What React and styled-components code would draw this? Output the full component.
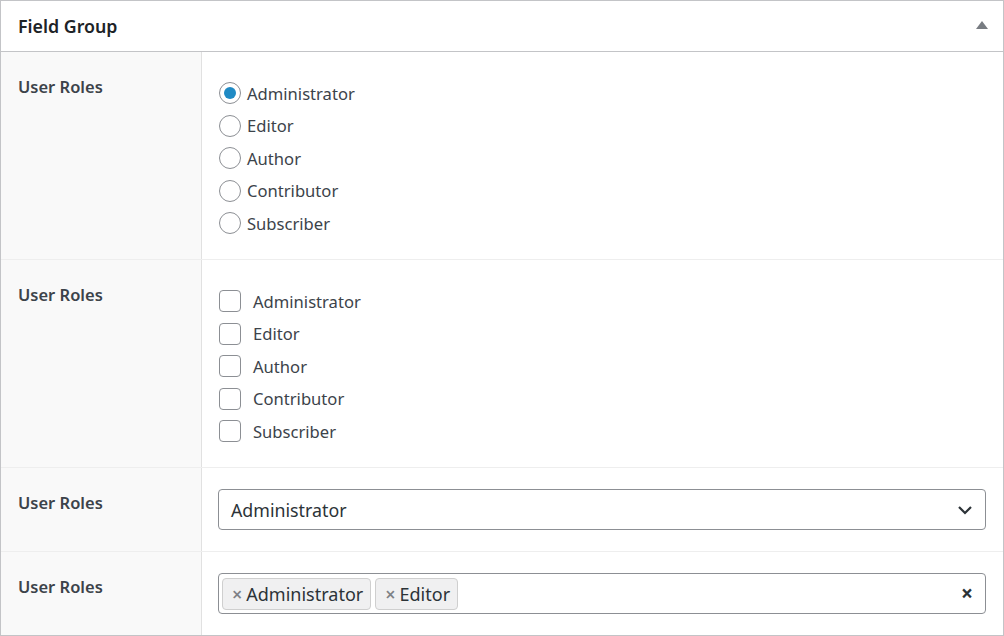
import React from "react";
import styled, { createGlobalStyle } from "styled-components";

const Global = createGlobalStyle`
  html, body { margin: 0; padding: 0; background: #fff; }
  body { font-family: "Noto Sans", "Open Sans", sans-serif; color: #1d2327; }
`;

const roles = ["Administrator", "Editor", "Author", "Contributor", "Subscriber"];

const Panel = styled.div`
  width: 1004px;
  height: 636px;
  box-sizing: border-box;
  border: 1px solid #c3c4c7;
  background: #fff;
  overflow: hidden;
`;

const Header = styled.div`
  height: 50px;
  display: flex;
  align-items: center;
  justify-content: space-between;
  padding: 0 15px 0 17px;
  border-bottom: 1px solid #c3c4c7;
  h2 {
    margin: 0;
    font-size: 17.8px;
    font-weight: 600;
    color: #1d2327;
  }
`;

const Toggle = styled.span`
  width: 0;
  height: 0;
  border-left: 6px solid transparent;
  border-right: 6px solid transparent;
  border-bottom: 8px solid #787c82;
  margin-top: -2px;
`;

const Row = styled.div`
  display: flex;
  height: ${(p) => p.h}px;
  border-bottom: 1px solid #eeeeee;
  &:last-child { border-bottom: none; }
`;

const Label = styled.div`
  width: 201px;
  flex: none;
  box-sizing: border-box;
  background: #f9f9f9;
  border-right: 1px solid #e1e1e1;
  padding: 23px 17px;
  font-size: 16.5px;
  font-weight: 600;
  color: #3c434a;
`;

const Field = styled.div`
  flex: 1;
  padding: ${(p) => p.pad};
  box-sizing: border-box;
`;

const List = styled.ul`
  list-style: none;
  margin: 0;
  padding: 0;
  display: flex;
  flex-direction: column;
  gap: 10.5px;
`;

const Item = styled.li`
  display: flex;
  align-items: center;
  height: 22px;
  font-size: 16.6px;
  color: #3c434a;
`;

const Radio = styled.span`
  width: 22px;
  height: 22px;
  box-sizing: border-box;
  border-radius: 50%;
  border: 1px solid #8c8f94;
  margin-right: 6px;
  display: flex;
  align-items: center;
  justify-content: center;
  &::after {
    content: "";
    width: 12px;
    height: 12px;
    border-radius: 50%;
    background: ${(p) => (p.checked ? "#1f8ac4" : "transparent")};
  }
`;

const Check = styled.span`
  width: 22px;
  height: 22px;
  box-sizing: border-box;
  border-radius: 4px;
  border: 1px solid #8c8f94;
  margin-right: 12px;
`;

const Select = styled.div`
  height: 41px;
  box-sizing: border-box;
  border: 1px solid #8c8f94;
  border-radius: 4px;
  display: flex;
  align-items: center;
  justify-content: space-between;
  padding: 0 12px 0 12px;
  font-size: 17.8px;
  color: #2c3338;
`;

const Multi = styled(Select)`
  padding: 0 12px 0 3px;
  justify-content: flex-start;
  gap: 4px;
`;

const Tag = styled.span`
  height: 32px;
  box-sizing: border-box;
  display: flex;
  align-items: center;
  padding: 0 7px 0 9px;
  background: #f0f0f1;
  border: 1px solid #cfcfcf;
  border-radius: 4px;
  font-size: 18px;
  color: #2c3338;
  b {
    font-weight: 600;
    color: #7e8186;
    margin-right: 4px;
    font-size: 18px;
  }
`;

const Clear = styled.span`
  margin-left: auto;
  font-size: 21px;
  font-weight: 700;
  color: #2c3338;
  line-height: 1;
`;

export default function App() {
  return (
    <>
      <Global />
      <Panel>
        <Header>
          <h2>Field Group</h2>
          <Toggle />
        </Header>
        <Row h={207}>
          <Label>User Roles</Label>
          <Field pad="30px 17px">
            <List>
              {roles.map((r, i) => (
                <Item key={r}>
                  <Radio checked={i === 0} />
                  {r}
                </Item>
              ))}
            </List>
          </Field>
        </Row>
        <Row h={207}>
          <Label>User Roles</Label>
          <Field pad="30px 17px">
            <List>
              {roles.map((r) => (
                <Item key={r}>
                  <Check />
                  {r}
                </Item>
              ))}
            </List>
          </Field>
        </Row>
        <Row h={83}>
          <Label>User Roles</Label>
          <Field pad="21px 17px 0 16px">
            <Select>
              Administrator
              <svg width="16" height="10" viewBox="0 0 16 10">
                <path d="M2 2l6 6 6-6" fill="none" stroke="#2c3338" strokeWidth="2.2" />
              </svg>
            </Select>
          </Field>
        </Row>
        <Row h={84}>
          <Label>User Roles</Label>
          <Field pad="21px 17px 0 16px">
            <Multi>
              <Tag><b>×</b>Administrator</Tag>
              <Tag><b>×</b>Editor</Tag>
              <Clear>×</Clear>
            </Multi>
          </Field>
        </Row>
      </Panel>
    </>
  );
}
